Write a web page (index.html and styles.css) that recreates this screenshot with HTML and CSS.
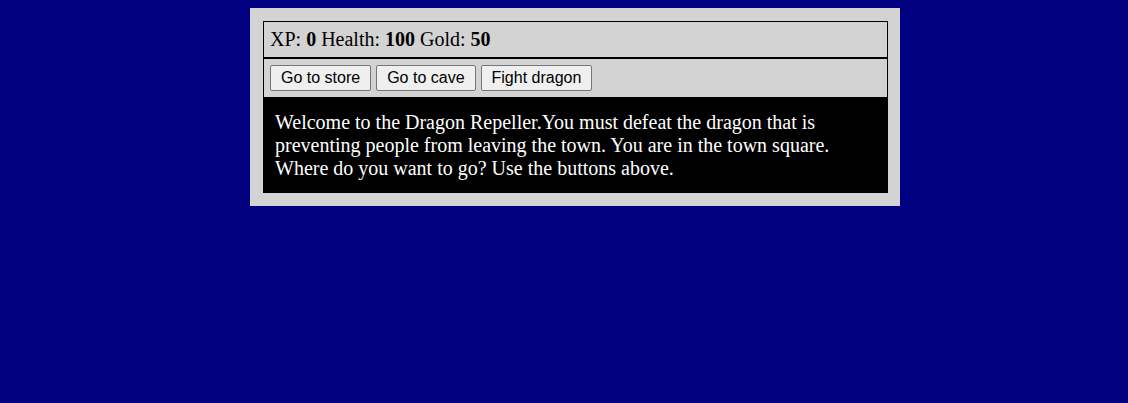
FILE: index.html
```html
<!DOCTYPE html>
<html lang="en">
<head>
<meta charset="utf-8">
<title>RPG - Dragon Repeller</title>
<link rel="stylesheet" href="styles.css">
</head>
<body>
<div class="game">
  <div class="stats">
    <span class="stat">XP: <strong>0</strong></span>
    <span class="stat">Health: <strong>100</strong></span>
    <span class="stat">Gold: <strong>50</strong></span>
  </div>
  <div class="controls">
    <button class="btn">Go to store</button>
    <button class="btn">Go to cave</button>
    <button class="btn">Fight dragon</button>
  </div>
  <div class="text">
    Welcome to the Dragon Repeller.You must defeat the dragon that is preventing people from leaving the town. You are in the town square. Where do you want to go? Use the buttons above.
  </div>
</div>
</body>
</html>
```

FILE: styles.css
```css
html, body {
  margin: 0;
  padding: 0;
}
body {
  background-color: #000080;
  font-family: "Liberation Serif", "Times New Roman", serif;
  font-size: 20px;
  padding: 8px 0 0 250px;
}
.game {
  width: 625px;
  background-color: #d3d3d3;
  padding: 13px 12px 13px 13px;
}
.stats {
  border: 1px solid #000;
  padding: 6px;
  color: #000;
  line-height: 23px;
  display: flex;
  gap: 5px;
}
.controls {
  border: 1px solid #000;
  padding: 6px;
  display: flex;
  gap: 5px;
}
.btn {
  font-family: "Liberation Sans", Arial, sans-serif;
  font-size: 16px;
  line-height: 18px;
  color: #000;
  background-color: #efefef;
  border: 1px solid #767676;
  border-radius: 2px;
  padding: 3px 10px;
  margin: 0;
}
.text {
  background-color: #000;
  color: #fff;
  padding: 13px 12px;
  line-height: 23px;
}
```
